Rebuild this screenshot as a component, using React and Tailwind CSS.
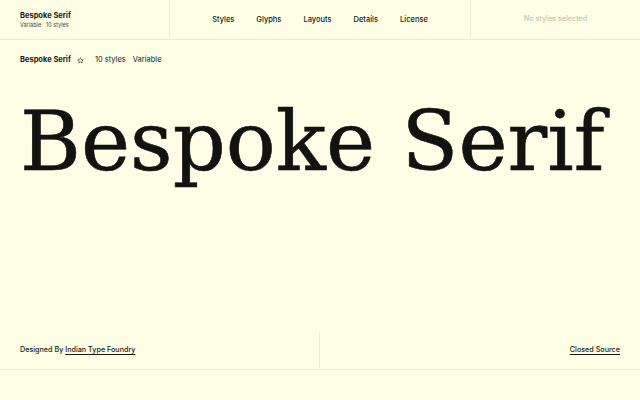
import React from 'react';

const navItems = ['Styles', 'Glyphs', 'Layouts', 'Details', 'License'];

const Star = () => (
  <svg width="7" height="7" viewBox="0 0 24 24" fill="none" stroke="currentColor" strokeWidth="2.2" strokeLinejoin="round">
    <path d="M12 2.5l2.9 6.1 6.6.8-4.9 4.6 1.3 6.6L12 17.3l-5.9 3.3 1.3-6.6-4.9-4.6 6.6-.8z" />
  </svg>
);

export default function App() {
  return (
    <div
      className="w-[640px] h-[400px] bg-[#fdfee5] text-[#1a1a14] flex flex-col overflow-hidden"
      style={{ fontFamily: 'Inter, "Liberation Sans", sans-serif' }}
    >
      {/* Top bar */}
      <header className="h-10 flex border-b border-[#ecedd6] shrink-0">
        <div className="w-[170px] border-r border-[#ecedd6] px-5 flex flex-col justify-center">
          <div className="text-[7.5px] font-bold leading-[10px]">Bespoke Serif</div>
          <div className="text-[5.5px] leading-[8px] text-[#444] flex gap-[5px]">
            <span>Variable</span>
            <span>10 styles</span>
          </div>
        </div>
        <nav className="flex-1 flex items-center justify-center gap-[22px] text-[7.5px] font-medium">
          {navItems.map((item) => (
            <span key={item}>{item}</span>
          ))}
        </nav>
        <div className="w-[170px] border-l border-[#ecedd6] flex items-center justify-center text-[7.2px] font-medium text-[#c5c6b4]">
          No styles selected
        </div>
      </header>

      {/* Info row */}
      <div className="px-5 pt-[15px] flex items-center text-[7.5px] h-[25px] shrink-0">
        <span className="font-bold">Bespoke Serif</span>
        <span className="ml-[6px] text-[#333] flex"><Star /></span>
        <span className="ml-[11px]">10 styles</span>
        <span className="ml-[7px]">Variable</span>
      </div>

      {/* Specimen */}
      <div
        className="pl-[20px] mt-[27px] text-[83px] leading-[100px] text-[#121210] whitespace-nowrap"
        style={{ fontFamily: '"DejaVu Serif", "Liberation Serif", serif', WebkitTextStroke: '0.6px #121210' }}
      >
        Bespoke Serif
      </div>

      <div className="flex-1" />

      {/* Footer */}
      <footer className="h-[38px] flex border-b border-[#ecedd6] shrink-0 text-[7.2px] font-medium">
        <div className="w-1/2 border-r border-[#ecedd6] px-5 flex items-center my-[1px]">
          <span>Designed By&nbsp;</span>
          <span className="underline underline-offset-2">Indian Type Foundry</span>
        </div>
        <div className="w-1/2 px-5 flex items-center justify-end">
          <span className="underline underline-offset-2">Closed Source</span>
        </div>
      </footer>
      <div className="h-[30px] shrink-0" />
    </div>
  );
}
